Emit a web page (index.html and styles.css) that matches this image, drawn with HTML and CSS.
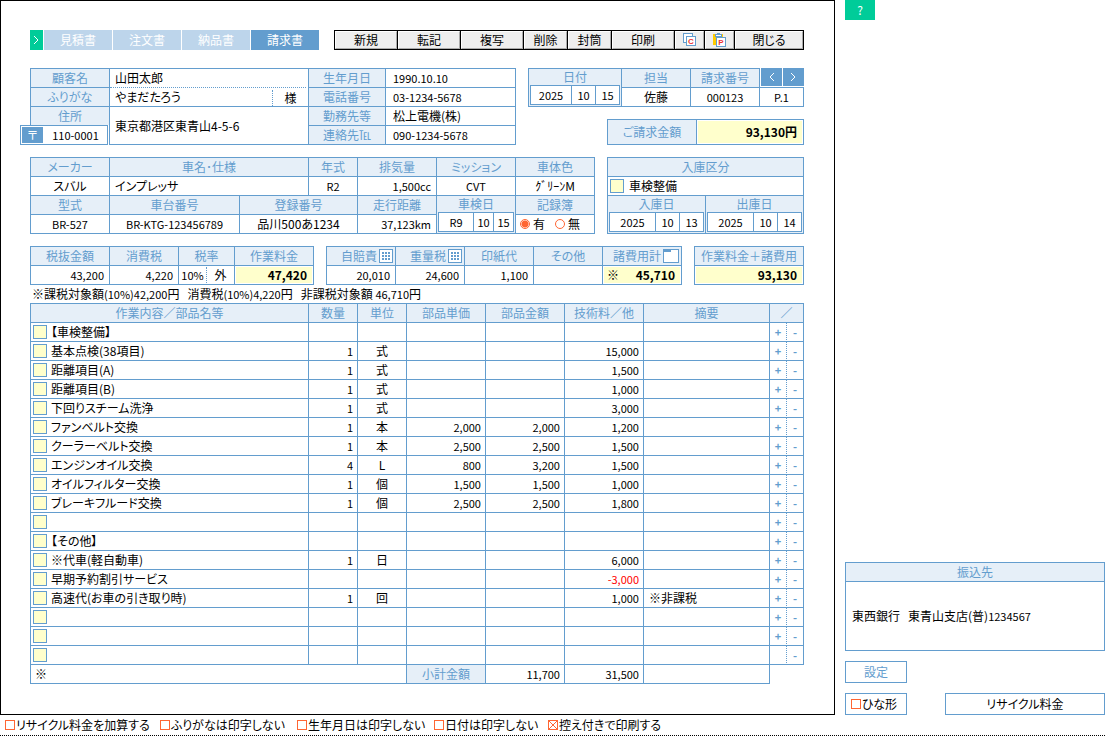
FILE: index.html
```html
<!DOCTYPE html>
<html lang="ja">
<head>
<meta charset="utf-8">
<title>請求書</title>
<link rel="stylesheet" href="styles.css">
</head>
<body>
<div class="page">
<main class="sheet">
  <div class="bar">
    <nav class="tabs">
      <button class="tab-next" aria-label="次へ"><svg width="7" height="10" viewBox="0 0 7 10"><path d="M1 1l4 4-4 4"/></svg></button>
      <button class="tab">見積書</button>
      <button class="tab">注文書</button>
      <button class="tab">納品書</button>
      <button class="tab active">請求書</button>
    </nav>
    <div class="tools">
      <button>新規</button><button>転記</button><button>複写</button><button>削除</button><button>封筒</button><button>印刷</button>
      <button aria-label="コピー"><svg width="14" height="14" viewBox="0 0 14 14"><rect x=".5" y=".5" width="9" height="9" fill="#fff" stroke="#639dce"/><rect x="3.5" y="3.5" width="9" height="9" fill="#fff" stroke="#639dce"/><text x="8" y="11">C</text></svg></button>
      <button aria-label="貼り付け"><svg width="14" height="14" viewBox="0 0 14 14"><rect x="0" y="1" width="10" height="11" fill="#fc0"/><rect x="2.5" y="1.5" width="6" height="2" fill="#fff" stroke="#639dce"/><path d="M4 .5h3" stroke="#639dce"/><rect x="3.5" y="4.5" width="9" height="9" fill="#fff" stroke="#639dce"/><text x="8" y="12">P</text></svg></button>
      <button>閉じる</button>
    </div>
  </div>

  <section class="row row-customer">
    <div class="grid customer">
      <label class="lb" for="name">顧客名</label>
      <div class="names">
        <input id="name" class="fld" value="山田太郎">
        <div class="kana"><input id="kana" class="fld" value="やまだたろう"><span>様</span></div>
      </div>
      <label class="lb" for="birth">生年月日</label><input id="birth" class="fld n" value="1990.10.10">
      <label class="lb" for="kana">ふりがな</label>
      <label class="lb" for="tel">電話番号</label><input id="tel" class="fld n" value="03-1234-5678">
      <label class="lb" for="addr">住所</label>
      <input id="addr" class="fld addr" value="東京都港区東青山4-5-6">
      <label class="lb" for="work">勤務先等</label><input id="work" class="fld" value="松上電機(株)">
      <div class="postal"><button>〒</button><input class="n" aria-label="郵便番号" value="110-0001"></div>
      <label class="lb full" for="tel2">連絡先℡</label><input id="tel2" class="fld n" value="090-1234-5678">
    </div>
    <div class="stack">
      <div class="grid docinfo">
        <div class="datecell"><span>日付</span>
          <div class="date"><input class="n" aria-label="年" value="2025"><input class="n" aria-label="月" value="10"><input class="n" aria-label="日" value="15"></div></div>
        <label class="lb" for="staff">担当</label><label class="lb" for="no">請求番号</label>
        <div class="pager"><button aria-label="前へ"><svg width="7" height="10" viewBox="0 0 7 10"><path d="M6 1L2 5l4 4"/></svg></button><button aria-label="次へ"><svg width="7" height="10" viewBox="0 0 7 10"><path d="M1 1l4 4-4 4"/></svg></button></div>
        <input id="staff" class="fld c" value="佐藤"><input id="no" class="fld c n" value="000123"><div class="c n">P.1</div>
      </div>
      <div class="grid amount"><div class="lb">ご請求金額</div><div class="sum"><b>93,130円</b></div></div>
    </div>
  </section>

  <section class="row row-vehicle">
    <div class="grid vehicle">
      <label class="lb" for="maker">メーカー</label><label class="lb w2" for="model">車名･仕様</label><label class="lb" for="year">年式</label><label class="lb" for="cc">排気量</label><label class="lb" for="mt">ミッション</label><label class="lb" for="color">車体色</label>
      <input id="maker" class="fld c" value="スバル"><input id="model" class="fld w2" value="インプレッサ"><input id="year" class="fld c n" value="R2"><input id="cc" class="fld r n" value="1,500cc"><input id="mt" class="fld c n" value="CVT"><input id="color" class="fld c full" value="ｸﾞﾘｰﾝM">
      <label class="lb" for="type">型式</label><label class="lb" for="vin">車台番号</label><label class="lb w2" for="plate">登録番号</label><label class="lb" for="km">走行距離</label>
      <div class="datecell"><span>車検日</span>
        <div class="date short"><input class="n" aria-label="年" value="R9"><input class="n" aria-label="月" value="10"><input class="n" aria-label="日" value="15"></div></div>
      <div class="lb">記録簿</div>
      <input id="type" class="fld c n" value="BR-527"><input id="vin" class="fld c n" value="BR-KTG-123456789"><input id="plate" class="fld c w2" value="品川500あ1234"><input id="km" class="fld r n" value="37,123km">
      <div class="radios"><label><input type="radio" name="book" checked>有</label><label><input type="radio" name="book">無</label></div>
    </div>
    <div class="grid stay">
      <div class="lb w2">入庫区分</div>
      <div class="w2 kind"><button class="sq" aria-label="選択"></button><span>車検整備</span></div>
      <div class="datecell"><span>入庫日</span>
        <div class="date wide"><input class="n" aria-label="年" value="2025"><input class="n" aria-label="月" value="10"><input class="n" aria-label="日" value="13"></div></div>
      <div class="datecell"><span>出庫日</span>
        <div class="date wide"><input class="n" aria-label="年" value="2025"><input class="n" aria-label="月" value="10"><input class="n" aria-label="日" value="14"></div></div>
    </div>
  </section>

  <section class="row row-fees">
    <div class="grid work">
      <div class="lb">税抜金額</div><div class="lb">消費税</div><div class="lb">税率</div><div class="lb">作業料金</div>
      <div class="r n">43,200</div><div class="r n">4,220</div><div class="rate"><span class="n">10%</span><span>外</span></div><div class="sum"><b>47,420</b></div>
    </div>
    <div class="grid costs">
      <div class="lb ic">自賠責<button aria-label="自賠責一覧"><svg width="14" height="14" viewBox="0 0 14 14"><rect x=".5" y=".5" width="13" height="13" fill="#fff" stroke="#639dce"/><path fill="#639dce" d="M3 3h2v2H3zM6 3h2v2H6zM9 3h2v2H9zM3 6h2v2H3zM6 6h2v2H6zM9 6h2v2H9zM3 9h2v2H3zM6 9h2v2H6zM9 9h2v2H9z"/></svg></button></div>
      <div class="lb ic">重量税<button aria-label="重量税一覧"><svg width="14" height="14" viewBox="0 0 14 14"><rect x=".5" y=".5" width="13" height="13" fill="#fff" stroke="#639dce"/><path fill="#639dce" d="M3 3h2v2H3zM6 3h2v2H6zM9 3h2v2H9zM3 6h2v2H3zM6 6h2v2H6zM9 6h2v2H9zM3 9h2v2H3zM6 9h2v2H6zM9 9h2v2H9z"/></svg></button></div>
      <div class="lb">印紙代</div><div class="lb">その他</div>
      <div class="lb ic">諸費用計<button aria-label="諸費用"><svg width="16" height="14" viewBox="0 0 16 14"><rect x=".5" y=".5" width="15" height="13" fill="#fff" stroke="#639dce"/><path fill="#639dce" d="M0 0h8v3H0z"/></svg></button></div>
      <div class="r n">20,010</div><div class="r n">24,600</div><div class="r n">1,100</div><div></div><div class="sum"><span>※</span><b>45,710</b></div>
    </div>
    <div class="grid total"><div class="lb">作業料金＋諸費用</div><div class="sum"><b>93,130</b></div></div>
  </section>

  <p class="note"><span>※課税対象額<span class="n">(10%)42,200</span>円</span><span>消費税<span class="n">(10%)4,220</span>円</span><span>非課税対象額 <span class="n">46,710</span>円</span></p>

  <table class="items">
    <colgroup><col><col class="c-q"><col class="c-q"><col class="c-p"><col class="c-p"><col class="c-p"><col class="c-m"><col class="c-s"><col class="c-s"></colgroup>
    <thead><tr><th>作業内容／部品名等</th><th>数量</th><th>単位</th><th>部品単価</th><th>部品金額</th><th>技術料／他</th><th>摘要</th><th colspan="2">／</th></tr></thead>
    <tbody>
      <tr><td><div><button class="sq" aria-label="選択"></button>【車検整備】</div></td><td></td><td></td><td></td><td></td><td></td><td></td><td><button>+</button></td><td><button>-</button></td></tr>
      <tr><td><div><button class="sq" aria-label="選択"></button>基本点検(38項目)</div></td><td>1</td><td>式</td><td></td><td></td><td>15,000</td><td></td><td><button>+</button></td><td><button>-</button></td></tr>
      <tr><td><div><button class="sq" aria-label="選択"></button>距離項目(A)</div></td><td>1</td><td>式</td><td></td><td></td><td>1,500</td><td></td><td><button>+</button></td><td><button>-</button></td></tr>
      <tr><td><div><button class="sq" aria-label="選択"></button>距離項目(B)</div></td><td>1</td><td>式</td><td></td><td></td><td>1,000</td><td></td><td><button>+</button></td><td><button>-</button></td></tr>
      <tr><td><div><button class="sq" aria-label="選択"></button>下回りスチーム洗浄</div></td><td>1</td><td>式</td><td></td><td></td><td>3,000</td><td></td><td><button>+</button></td><td><button>-</button></td></tr>
      <tr><td><div><button class="sq" aria-label="選択"></button>ファンベルト交換</div></td><td>1</td><td>本</td><td>2,000</td><td>2,000</td><td>1,200</td><td></td><td><button>+</button></td><td><button>-</button></td></tr>
      <tr><td><div><button class="sq" aria-label="選択"></button>クーラーベルト交換</div></td><td>1</td><td>本</td><td>2,500</td><td>2,500</td><td>1,500</td><td></td><td><button>+</button></td><td><button>-</button></td></tr>
      <tr><td><div><button class="sq" aria-label="選択"></button>エンジンオイル交換</div></td><td>4</td><td>L</td><td>800</td><td>3,200</td><td>1,500</td><td></td><td><button>+</button></td><td><button>-</button></td></tr>
      <tr><td><div><button class="sq" aria-label="選択"></button>オイルフィルター交換</div></td><td>1</td><td>個</td><td>1,500</td><td>1,500</td><td>1,000</td><td></td><td><button>+</button></td><td><button>-</button></td></tr>
      <tr><td><div><button class="sq" aria-label="選択"></button>ブレーキフルード交換</div></td><td>1</td><td>個</td><td>2,500</td><td>2,500</td><td>1,800</td><td></td><td><button>+</button></td><td><button>-</button></td></tr>
      <tr><td><div><button class="sq" aria-label="選択"></button></div></td><td></td><td></td><td></td><td></td><td></td><td></td><td><button>+</button></td><td><button>-</button></td></tr>
      <tr><td><div><button class="sq" aria-label="選択"></button>【その他】</div></td><td></td><td></td><td></td><td></td><td></td><td></td><td><button>+</button></td><td><button>-</button></td></tr>
      <tr><td><div><button class="sq" aria-label="選択"></button>※代車(軽自動車)</div></td><td>1</td><td>日</td><td></td><td></td><td>6,000</td><td></td><td><button>+</button></td><td><button>-</button></td></tr>
      <tr><td><div><button class="sq" aria-label="選択"></button>早期予約割引サービス</div></td><td></td><td></td><td></td><td></td><td class="minus">-3,000</td><td></td><td><button>+</button></td><td><button>-</button></td></tr>
      <tr><td><div><button class="sq" aria-label="選択"></button>高速代(お車の引き取り時)</div></td><td>1</td><td>回</td><td></td><td></td><td>1,000</td><td>※非課税</td><td><button>+</button></td><td><button>-</button></td></tr>
      <tr><td><div><button class="sq" aria-label="選択"></button></div></td><td></td><td></td><td></td><td></td><td></td><td></td><td><button>+</button></td><td><button>-</button></td></tr>
      <tr><td><div><button class="sq" aria-label="選択"></button></div></td><td></td><td></td><td></td><td></td><td></td><td></td><td><button>+</button></td><td><button>-</button></td></tr>
      <tr><td><div><button class="sq" aria-label="選択"></button></div></td><td></td><td></td><td></td><td></td><td></td><td></td><td></td><td><button>-</button></td></tr>
    </tbody>
    <tfoot><tr><td colspan="3" class="rem">※</td><th>小計金額</th><td class="num">11,700</td><td class="num">31,500</td><td></td></tr></tfoot>
  </table>
</main>

<aside class="side">
  <button class="help">?</button>
  <section class="bank"><h2>振込先</h2><p>東西銀行<span>東青山支店(普)<span class="n">1234567</span></span></p></section>
  <button class="box setting">設定</button>
  <div class="side-row"><label class="box"><input type="checkbox">ひな形</label><button class="box recycle">リサイクル料金</button></div>
</aside>
</div>

<footer class="options">
  <label><input type="checkbox">リサイクル料金を加算する</label>
  <label><input type="checkbox">ふりがなは印字しない</label>
  <label><input type="checkbox">生年月日は印字しない</label>
  <label><input type="checkbox">日付は印字しない</label>
  <label><input type="checkbox" checked>控え付きで印刷する</label>
</footer>
</body>
</html>
```
FILE: styles.css
```css
:root {
  --line: #639dce;
  --head: #e6eff8;
  --yellow: #ffffcc;
  --green: #00cc99;
  --orange: #ff6633;
}

* { box-sizing: border-box; }

body {
  margin: 0;
  background: #fff;
  color: #000;
  font: 12px/18px "Noto Sans CJK JP", sans-serif;
  font-feature-settings: "palt";
}

button, input {
  margin: 0;
  padding: 0;
  border: 0;
  border-radius: 0;
  background: none;
  color: inherit;
  font: inherit;
  font-feature-settings: inherit;
  min-width: 0;
}

button { display: flex; align-items: center; justify-content: center; cursor: pointer; }
svg { display: block; }
p, h2 { margin: 0; }
.n { font-size: 11px; }
.full { font-feature-settings: normal; }

.page { display: flex; gap: 10px; }
.sheet { flex: 1; min-width: 0; border: 1px solid #000; padding: 29px 30px 30px 29px; }

/* tabs and toolbar */
.bar {
  display: grid;
  grid-template-columns: minmax(0, 289fr) minmax(0, 470fr);
  grid-template-rows: 20px;
  gap: 15px;
  margin-bottom: 18px;
}
.tabs { display: flex; gap: 1px; }
.tab-next { width: 13px; background: var(--green); }
.tab { flex: 1; background: #bdd5eb; color: #fff; }
.tab.active { background: var(--line); }
.tab-next path, .pager path { fill: none; stroke: #fff; }

.tools {
  display: grid;
  grid-template-columns: 62fr 62fr 62fr 43fr 43fr 62fr 29fr 29fr 68fr;
  gap: 1px;
  border: 1px solid #000;
  background: #000;
}
.tools button { background: #eee; border: 1px solid #fff; border-right-color: #aaa; border-bottom-color: #aaa; line-height: 16px; }
.tools text { font: bold 8px "Liberation Sans", sans-serif; fill: #e33; text-anchor: middle; }

/* ruled form blocks */
.row { display: grid; gap: 12px; margin-bottom: 12px; }
.row-customer { grid-template-columns: minmax(0, 486fr) minmax(0, 276fr); }
.row-vehicle { grid-template-columns: minmax(0, 565fr) minmax(0, 197fr); }
.row-fees { grid-template-columns: minmax(0, 284fr) minmax(0, 356fr) minmax(0, 110fr); margin-bottom: 0; }

.grid { display: grid; grid-auto-rows: 18px; gap: 1px; border: 1px solid var(--line); background: var(--line); }
.grid > * { background: #fff; line-height: 18px; white-space: nowrap; }
.grid > .lb { background: var(--head); color: var(--line); text-align: center; }
.fld { width: 100%; padding: 0 5px; }
.c { text-align: center; }
.r { text-align: right; padding-right: 5px; }
.w2 { grid-column: span 2; }

.customer { grid-template-columns: 78fr 198fr 76fr 129fr; }
.names { grid-row: span 2; display: grid; grid-template-rows: 1fr 18px; }
.names > .fld { border-bottom: 1px dotted var(--line); width: auto; margin-right: 2px; }
.kana { display: flex; }
.kana span { flex: none; width: 36px; margin-top: 2px; border-left: 1px dotted var(--line); text-align: center; line-height: 16px; }
.addr { grid-row: span 2; }
.customer > #birth, .customer > #tel, .customer > #work, .customer > #tel2 { padding-left: 7px; }
.customer > .postal {
  display: flex;
  margin: -1px 1px -1px -11px;
  padding: 1px;
  border: 1px solid var(--line);
  box-shadow: 1px 0 0 #fff;
  z-index: 1;
}
.postal button { width: 21px; background: var(--line); color: #fff; }
.postal input { flex: 1; width: 0; text-align: center; padding-left: 2px; }

.stack { display: grid; grid-template-columns: 79fr 197fr; align-content: space-between; }
.docinfo { grid-column: span 2; grid-template-columns: 92fr 68fr 68fr 43fr; }
.docinfo .datecell { grid-row: span 2; }
.datecell { display: flex; flex-direction: column; padding: 0 1px 1px; }
.grid > .datecell { background: var(--head); color: var(--line); text-align: center; }
.datecell > span { line-height: 16px; }
.date {
  flex: 1;
  display: grid;
  grid-template-columns: 40fr 23fr 23fr;
  gap: 1px;
  border: 1px solid var(--line);
  background: var(--line);
}
.date.short { grid-template-columns: 34fr 19fr 19fr; }
.date.wide { grid-template-columns: 45fr 23fr 23fr; }
.date input { width: 100%; background: #fff; color: #000; text-align: center; }
.grid > .pager { display: flex; gap: 1px; margin: -1px -1px 0 0; padding: 0 0 1px 1px; }
.pager button { flex: 1; background: var(--line); }
.amount { grid-column: 2; grid-template-columns: 88fr 106fr; grid-auto-rows: 24px; }
.grid.amount > * { line-height: 24px; }
.sum { display: flex; align-items: center; justify-content: flex-end; padding: 0 5px 0 3px; }
.grid > .sum { background: var(--yellow); border: 1px solid #fff; line-height: 16px; }
.sum span { margin-right: auto; }

.vehicle { grid-template-columns: 78fr 129fr 68fr 48fr 78fr 78fr 78fr; }
.vehicle .datecell { grid-row: span 2; }
.radios { display: flex; gap: 10px; padding-left: 4px; }
label:has(> input) { display: flex; align-items: center; gap: 1px; white-space: nowrap; }
input[type="radio"], input[type="checkbox"] {
  appearance: none;
  flex: none;
  width: 10px;
  height: 10px;
  border: 1px solid var(--orange);
}
input[type="radio"] { border-radius: 50%; margin-right: 2px; }
input[type="radio"]:checked { background: radial-gradient(circle, var(--orange) 0 3px, #fff 4px); }
input[type="checkbox"]:checked {
  background:
    linear-gradient(45deg, transparent 45%, var(--orange) 45% 55%, transparent 55%),
    linear-gradient(-45deg, transparent 45%, var(--orange) 45% 55%, transparent 55%);
}

.stay { grid-template-columns: 1fr 1fr; grid-template-rows: 18px 18px 37px; }
.kind { display: flex; align-items: center; gap: 5px; padding-left: 2px; }
.sq { flex: none; width: 14px; height: 14px; background: var(--yellow); border: 1px solid var(--line); }

.work { grid-template-columns: 78fr 68fr 55fr 78fr; }
.rate { display: flex; padding: 1px 0; }
.grid > .rate span { flex: 1; text-align: center; line-height: 16px; }
.rate span + span { border-left: 1px dotted var(--line); }
.costs { grid-template-columns: 68fr 68fr 68fr 68fr 78fr; }
.ic { display: flex; align-items: center; justify-content: flex-end; gap: 2px; padding-right: 2px; }
.note { display: flex; gap: 8px; padding-left: 2px; white-space: nowrap; }

/* line items */
.items {
  width: 100%;
  table-layout: fixed;
  border-collapse: separate;
  border-spacing: 0;
  border: solid var(--line);
  border-width: 1px 0 0 1px;
}
.c-q { width: 49px; }
.c-p { width: 79px; }
.c-m { width: 126px; }
.c-s { width: 17px; }
.items th, .items td { height: 19px; padding: 0; border: solid var(--line); border-width: 0 1px 1px 0; white-space: nowrap; }
.items th { background: var(--head); color: var(--line); font-weight: normal; }
.items td > div { display: flex; align-items: center; gap: 4px; padding-left: 2px; }
.items tbody td:nth-child(n+2) { text-align: right; padding-right: 4px; font-size: 11px; }
.items tbody td:nth-child(3) { text-align: center; padding: 0; font-size: 12px; }
.items tbody td:nth-child(7) { text-align: left; padding-left: 5px; font-size: 12px; }
.items tbody td:nth-child(n+8) { padding: 0; color: var(--line); }
.items tbody td:nth-child(8) { border-right-style: dotted; }
.items td:nth-child(n+8) button { width: 100%; height: 18px; font-weight: bold; }
.items .num { text-align: right; padding-right: 4px; font-size: 11px; }
.items .rem { padding-left: 4px; }
.items tbody .minus { color: #f00; }

/* side column */
.side { width: 260px; display: flex; flex-direction: column; align-items: flex-start; gap: 10px; }
.help { width: 30px; height: 20px; background: var(--green); color: #fff; }
.bank { width: 100%; margin-top: auto; border: 1px solid var(--line); }
.bank h2 { background: var(--head); border-bottom: 1px solid var(--line); color: var(--line); font: inherit; text-align: center; }
.bank p { display: flex; align-items: center; gap: 8px; min-height: 68px; padding-left: 6px; }
.box { width: 62px; height: 22px; border: 1px solid var(--line); padding-left: 5px; }
.setting { color: var(--line); padding: 0; }
.side-row { width: 100%; display: flex; justify-content: space-between; }
.recycle { width: 160px; padding: 0; }

.options {
  display: grid;
  grid-template-columns: 155px 137px 137px 114px auto;
  height: 21px;
  padding-left: 5px;
  border-bottom: 1px dotted #000;
}
```
